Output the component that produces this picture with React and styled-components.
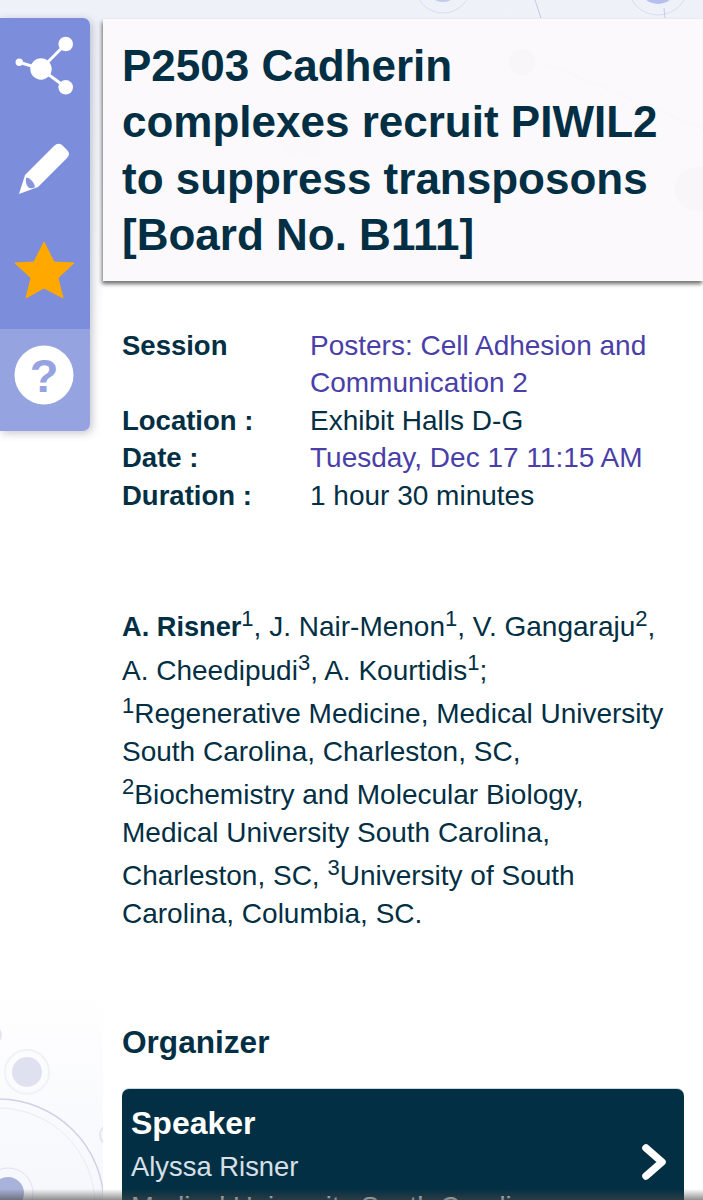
import React from 'react';
import styled, { createGlobalStyle } from 'styled-components';

const GlobalStyle = createGlobalStyle`
  html, body {
    margin: 0;
    padding: 0;
    background: #fff;
  }
  body {
    font-family: "Liberation Sans", Arial, sans-serif;
    color: #032f44;
  }
`;

const Page = styled.div`
  position: relative;
  width: 703px;
  height: 1200px;
  overflow: hidden;
  display: flex;
  align-items: flex-start;
  background: linear-gradient(to bottom, #eff1f9 0, #ffffff 30%, #ffffff 82%, #f6f7fc 100%);
`;

const Backdrop = styled.svg`
  position: absolute;
  inset: 0;
`;

const BottomShade = styled.div`
  position: absolute;
  left: 0;
  right: 0;
  bottom: 0;
  height: 11px;
  background: linear-gradient(to bottom, rgba(70, 70, 70, 0), rgba(70, 70, 70, 0.6));
`;

const Rail = styled.nav`
  position: relative;
  flex: 0 0 90px;
  margin: 18px 13px 0 0;
  border-radius: 0 7px 7px 0;
  overflow: hidden;
  box-shadow: 2px 2px 8px rgba(60, 60, 90, 0.3);
`;

const RailGroup = styled.div`
  display: flex;
  flex-direction: column;
  align-items: flex-start;
  height: ${({ $h }) => $h}px;
  padding: ${({ $top }) => $top}px 0 0 14px;
  box-sizing: border-box;
  background: ${({ $light }) => ($light ? '#95a3e0' : '#7b8ddb')};
`;

const RailIcon = styled.svg`
  display: block;
  margin-bottom: ${({ $gap }) => $gap || 0}px;
`;

const Content = styled.main`
  position: relative;
  flex: 1;
  min-width: 0;
  margin-top: 19px;
  height: 1181px;
  background: #fff;
`;

const TitleCard = styled.header`
  position: relative;
  height: 262px;
  box-sizing: border-box;
  padding: 19px 20px 0 19px;
  background: #fbf9fb;
  box-shadow: -1px 3px 4px rgba(50, 50, 50, 0.7);
`;

const TitleArt = styled.svg`
  position: absolute;
  inset: 0;
`;

const Title = styled.h1`
  position: relative;
  margin: 0;
  font-size: 44px;
  line-height: 56.3px;
  font-weight: 700;
  color: #032f44;
`;

const Details = styled.dl`
  display: grid;
  grid-template-columns: 188px 1fr;
  margin: 45.5px 20px 0 19px;
  font-size: 28px;
  line-height: 37.5px;
`;

const Label = styled.dt`
  font-size: 27.5px;
  font-weight: 700;
  color: #032f44;
`;

const Value = styled.dd`
  margin: 0;
  color: ${({ $link }) => ($link ? '#4a3fa8' : '#032f44')};
`;

const Authors = styled.p`
  margin: 88px 19px 0 19px;
  font-size: 28px;
  line-height: 37.5px;
  color: #032f44;

  b {
    font-size: 27.2px;
    font-weight: 700;
  }
  sup {
    font-size: 22px;
    line-height: 33px;
    vertical-align: 10px;
  }
`;

const SectionTitle = styled.h2`
  margin: 89.5px 0 0 19px;
  font-size: 31.6px;
  line-height: 40px;
  font-weight: 700;
  color: #032f44;
`;

const SpeakerCard = styled.div`
  position: relative;
  margin: 27px 19px 0 19px;
  height: 160px;
  padding: 14px 9px;
  box-sizing: border-box;
  border-radius: 7px;
  background: #032f44;
  box-shadow: 0 -1px 0 #c6dae4;
  color: #fff;
`;

const SpeakerRole = styled.div`
  font-size: 32px;
  line-height: 40px;
  font-weight: 700;
`;

const SpeakerLine = styled.div`
  font-size: 27.4px;
  line-height: 40px;
  margin-top: ${({ $first }) => ($first ? 4 : 0)}px;
  color: #d6e0e6;
`;

const Chevron = styled.svg`
  position: absolute;
  right: 16px;
  top: 54px;
`;

function Decorations() {
  return (
    <Backdrop width="703" height="1200" viewBox="0 0 703 1200" fill="none">
      <circle cx="443" cy="-15" r="28" stroke="#d8dcf0" />
      <circle cx="443" cy="-15" r="17" fill="#c3cbec" />
      <circle cx="658" cy="-15" r="30" stroke="#d8dcf0" />
      <circle cx="658" cy="-15" r="19" fill="#b5c0ee" />
      <path d="M535 0 L541 18" stroke="#c4cbe6" />
      <path d="M664 8 L665 18" stroke="#c4cbe6" />
      <circle cx="-8" cy="1035" r="10" fill="#e4e6f3" />
      <circle cx="27" cy="1072" r="22" stroke="#f1f2f9" strokeWidth="2" />
      <circle cx="27" cy="1072" r="15" fill="#dfe1f0" />
      <circle cx="-2" cy="1205" r="106" stroke="#ced2e8" strokeWidth="1.5" />
      <circle cx="-2" cy="1205" r="97" stroke="#e9ebf5" />
      <circle cx="8" cy="1193" r="25" stroke="#dfe2f0" />
      <circle cx="8" cy="1193" r="16" fill="#a9b2d8" />
      <circle cx="110" cy="1135" r="10" stroke="#e4e6f3" strokeWidth="2" />
    </Backdrop>
  );
}

export default function App() {
  return (
    <Page>
      <GlobalStyle />
      <Decorations />
      <Rail>
        <RailGroup $h={311} $top={18}>
          <RailIcon $gap={46} width="60" height="60" viewBox="0 0 60 60">
            <path d="M27 33 L51.7 8 M27 33 L51.7 51.3 M5.3 26.3 L27 33" stroke="#fff" strokeWidth="3" />
            <circle cx="27" cy="33" r="10.7" fill="#fff" />
            <circle cx="51.7" cy="8" r="7.3" fill="#fff" />
            <circle cx="51.7" cy="51.3" r="7.3" fill="#fff" />
            <circle cx="5.3" cy="26.3" r="3.7" fill="#fff" />
          </RailIcon>
          <RailIcon $gap={42} width="58" height="56" viewBox="-1 0 58 56">
            <path d="M4 52 L10 33 L39 4 Q43 0 47 3 L52 8 Q56 12 52 16 L23 45 Z" fill="#fff" />
            <path d="M11 36 Q10 42 14 46 Q18 47 20 45 Q19 40 15 37 Q13 35 11 36 Z" fill="#8795dd" />
          </RailIcon>
          <RailIcon width="62" height="60" viewBox="0 0 62 60">
            <path d="M30 2 L40 22 L60 23 L44 38 L49 58 L30 48 L12 58 L17 38 L1 23 L20 22 Z" fill="#ffa800" stroke="#ffa800" strokeLinejoin="round" />
          </RailIcon>
        </RailGroup>
        <RailGroup $light $h={102} $top={16}>
          <RailIcon width="60" height="60" viewBox="0 0 60 60">
            <circle cx="30" cy="30" r="29.5" fill="#fff" />
            <text x="30" y="47" textAnchor="middle" fontFamily="Liberation Sans" fontWeight="700" fontSize="47" fill="#95a3e0">?</text>
          </RailIcon>
        </RailGroup>
      </Rail>
      <Content>
        <TitleCard>
          <TitleArt width="600" height="262" viewBox="0 0 600 262" fill="none">
            <circle cx="419" cy="43" r="13" fill="#f8f6f8" />
            <circle cx="200" cy="120" r="20" fill="#faf8fa" />
            <circle cx="594" cy="170" r="22" fill="#f8f6f8" />
            <path d="M432 40 L600 110" stroke="#f8f6f9" />
          </TitleArt>
          <Title>P2503 Cadherin<br />complexes recruit PIWIL2<br />to suppress transposons<br />[Board No. B111]</Title>
        </TitleCard>
        <Details>
          <Label>Session</Label>
          <Value $link>Posters: Cell Adhesion and Communication 2</Value>
          <Label>Location :</Label>
          <Value>Exhibit Halls D-G</Value>
          <Label>Date :</Label>
          <Value $link>Tuesday, Dec 17 11:15 AM</Value>
          <Label>Duration :</Label>
          <Value>1 hour 30 minutes</Value>
        </Details>
        <Authors>
          <b>A. Risner</b><sup>1</sup>, J. Nair-Menon<sup>1</sup>, V. Gangaraju<sup>2</sup>, A. Cheedipudi<sup>3</sup>, A. Kourtidis<sup>1</sup>;<br />
          <sup>1</sup>Regenerative Medicine, Medical University South Carolina, Charleston, SC, <sup>2</sup>Biochemistry and Molecular Biology, Medical University South Carolina,<br />Charleston, SC, <sup>3</sup>University of South Carolina, Columbia, SC.
        </Authors>
        <SectionTitle>Organizer</SectionTitle>
        <SpeakerCard>
          <SpeakerRole>Speaker</SpeakerRole>
          <SpeakerLine $first>Alyssa Risner</SpeakerLine>
          <SpeakerLine>Medical University South Carolina</SpeakerLine>
          <Chevron width="28" height="38" viewBox="0 0 28 38" fill="none">
            <path d="M6 5 L22 19 L6 33" stroke="#fff" strokeWidth="7.5" strokeLinecap="round" strokeLinejoin="round" />
          </Chevron>
        </SpeakerCard>
      </Content>
      <BottomShade />
    </Page>
  );
}
